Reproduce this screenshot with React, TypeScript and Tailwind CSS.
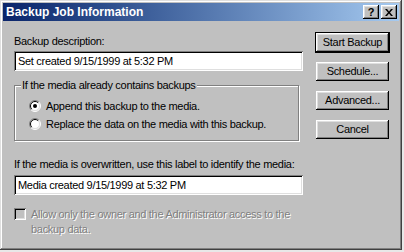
const raised =
  "shadow-[inset_-1px_-1px_#000,inset_1px_1px_#fff,inset_-2px_-2px_#808080,inset_2px_2px_#dfdfdf]";
const sunken =
  "shadow-[inset_1px_1px_#808080,inset_-1px_-1px_#fff,inset_2px_2px_#000,inset_-2px_-2px_#dfdfdf]";

function Radio({ checked }: { checked?: boolean }) {
  return (
    <svg width="12" height="12" viewBox="0 0 12 12" className="shrink-0">
      <circle cx="6" cy="6" r="5" fill="#fff" />
      <path d="M2.1 9.9A5.5 5.5 0 0 1 9.9 2.1" stroke="#808080" fill="none" />
      <path d="M9.9 2.1A5.5 5.5 0 0 1 2.1 9.9" stroke="#fff" fill="none" />
      <path d="M2.8 9.2A4.5 4.5 0 0 1 9.2 2.8" stroke="#000" fill="none" />
      <path d="M9.2 2.8A4.5 4.5 0 0 1 2.8 9.2" stroke="#dfdfdf" fill="none" />
      {checked ? <circle cx="6" cy="6" r="2" fill="#000" /> : null}
    </svg>
  );
}

function Button({ label, primary }: { label: string; primary?: boolean }) {
  return (
    <div className={primary ? "border border-black" : "border border-transparent"}>
      <div className={`flex h-[19px] items-center justify-center ${raised}`}>{label}</div>
    </div>
  );
}

function Field({ value }: { value: string }) {
  return (
    <div className={`flex h-[20px] items-center bg-white px-[4px] ${sunken}`}>
      {value}
    </div>
  );
}

export default function App() {
  return (
    <div className="h-[252px] w-[404px] bg-[#e8e8e8] font-['Liberation_Sans',Arial,sans-serif] text-[11px] leading-[13px] tracking-[-0.3px] text-black">
      <div className="flex h-[250px] w-[402px] flex-col bg-[#c0c0c0] p-[3px] shadow-[inset_-1px_-1px_#404040,inset_1px_1px_#dfdfdf,inset_-2px_-2px_#808080,inset_2px_2px_#fff]">
        <div className="flex h-[18px] items-center bg-linear-to-r from-[#0a246a] to-[#a6caf0] pl-[3px] pr-[2px]">
          <span className="flex-1 text-[12px] font-bold tracking-normal text-white">Backup Job Information</span>
          <div className={`flex h-[14px] w-[16px] items-center justify-center bg-[#c0c0c0] text-[11px] font-bold ${raised}`}>
            ?
          </div>
          <div className={`ml-[2px] flex h-[14px] w-[16px] items-center justify-center bg-[#c0c0c0] ${raised}`}>
            <svg width="8" height="7" viewBox="0 0 8 7">
              <path d="M0 0h2l2 2.5L6 0h2L5 3.5 8 7H6L4 4.5 2 7H0l3-3.5z" fill="#000" />
            </svg>
          </div>
        </div>

        <div className="flex pl-[11px] pt-[11px]">
          <div className="flex w-[289px] flex-col pt-[3px]">
            <div>Backup description:</div>
            <div className="mt-[3px]">
              <Field value="Set created 9/15/1999 at 5:32 PM" />
            </div>

            <fieldset className="mr-[4px] mt-[8px] border border-[#808080] pb-[8px] pl-[6px] pr-[7px] pt-[6px] shadow-[inset_1px_1px_#fff,1px_1px_#fff]">
              <legend className="bg-[#c0c0c0] px-[1px]">If the media already contains backups</legend>
              <div className="flex flex-col gap-[2px] pl-[8px]">
                <div className="flex h-[16px] items-center gap-[5px]">
                  <Radio checked />
                  <span>Append this backup to the media.</span>
                </div>
                <div className="flex h-[16px] items-center gap-[5px]">
                  <Radio />
                  <span>Replace the data on the media with this backup.</span>
                </div>
              </div>
            </fieldset>

            <div className="mt-[17px] whitespace-nowrap">If the media is overwritten, use this label to identify the media:</div>
            <div className="mt-[4px]">
              <Field value="Media created 9/15/1999 at 5:32 PM" />
            </div>

            <div className="mt-[12px] flex items-start gap-[5px]">
              <div className={`mt-[1px] h-[12px] w-[12px] shrink-0 bg-[#c0c0c0] ${sunken}`} />
              <span className="w-[268px] leading-[15px] text-[#808080] [text-shadow:1px_1px_#fff]">
                Allow only the owner and the Administrator access to the backup data.
              </span>
            </div>
          </div>

          <div className="ml-[12px] flex w-[75px] flex-col gap-[8px]">
            <Button label="Start Backup" primary />
            <Button label="Schedule..." />
            <Button label="Advanced..." />
            <Button label="Cancel" />
          </div>
        </div>
      </div>
    </div>
  );
}
